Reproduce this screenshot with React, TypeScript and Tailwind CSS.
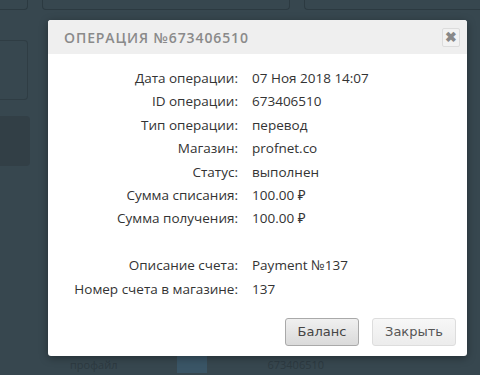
import React from "react";

const rows: [string, string][] = [
  ["Дата операции:", "07 Ноя 2018 14:07"],
  ["ID операции:", "673406510"],
  ["Тип операции:", "перевод"],
  ["Магазин:", "profnet.co"],
  ["Статус:", "выполнен"],
  ["Сумма списания:", "100.00 ₽"],
  ["Сумма получения:", "100.00 ₽"],
  ["", ""],
  ["Описание счета:", "Payment №137"],
  ["Номер счета в магазине:", "137"],
];

export default function App() {
  return (
    <div className="relative w-[480px] h-[375px] overflow-hidden bg-[#37474f]" style={{ fontFamily: "'Open Sans', 'Noto Sans', sans-serif" }}>
      {/* background page */}
      <div className="flex gap-[14px] h-[10px]">
        <div className="w-[28px] rounded-br-[4px] border-b border-r border-[#2c3a41]" />
        <div className="w-[248px] rounded-b-[4px] border-b border-x border-[#2c3a41]" />
        <div className="flex-1 rounded-bl-[4px] border-b border-l border-[#2c3a41]" />
      </div>
      <div className="mt-[30px] flex gap-[14px]">
        <div className="w-[28px] h-[60px] rounded-r-[4px] border border-l-0 border-[#2f3d44]" />
      </div>
      <div className="mt-[16px] w-[30px] h-[50px] rounded-r-[4px] bg-[#323f46]" />
      <div className="absolute left-0 bottom-0 flex items-end gap-[60px] pl-[70px] pb-[2px] text-[11px] text-[#2d3a41]">
        <span>профайл</span>
        <span className="w-[30px] h-[20px] rounded-t-[4px] bg-[#3a5566]" />
        <span>673406510</span>
      </div>

      {/* modal */}
      <div className="absolute left-[48px] top-[20px] w-[419px] h-[336px] bg-white rounded-[3px] shadow-[0_2px_8px_rgba(0,0,0,0.35)] flex flex-col overflow-hidden">
        <div className="h-[34px] bg-[#efefef] flex items-center justify-between pl-[16px] pr-[7px]">
          <span className="text-[14px] font-semibold tracking-[0.9px] text-[#8a8a8a]">ОПЕРАЦИЯ №673406510</span>
          <div className="w-[18px] h-[19px] border border-[#dcdcdc] bg-[#f2f2f2] rounded-[2px] flex items-center justify-center text-[#888] text-[14px] font-bold leading-none">
            ✖
          </div>
        </div>
        <div className="pt-[13px] grid grid-cols-[190px_1fr] gap-x-[14px] text-[13.5px] text-[#333] leading-[23.4px]">
          {rows.map(([l, v], i) => (
            <React.Fragment key={i}>
              <div className="text-right h-[23.4px]">{l}</div>
              <div className="h-[23.4px]">{v}</div>
            </React.Fragment>
          ))}
        </div>
        <div className="mt-[17px] flex justify-end gap-[13px] pr-[11px]" style={{ fontFamily: "'DejaVu Sans', sans-serif" }}>
          <button className="w-[74px] h-[28px] rounded-[3px] border border-[#a9a9a9] bg-gradient-to-b from-[#f0f0f0] to-[#dadada] text-[13px] text-[#444]">
            Баланс
          </button>
          <button className="w-[84px] h-[28px] rounded-[3px] border border-[#dddddd] bg-gradient-to-b from-[#f7f7f7] to-[#ececec] text-[13px] text-[#555]">
            Закрыть
          </button>
        </div>
      </div>
    </div>
  );
}
